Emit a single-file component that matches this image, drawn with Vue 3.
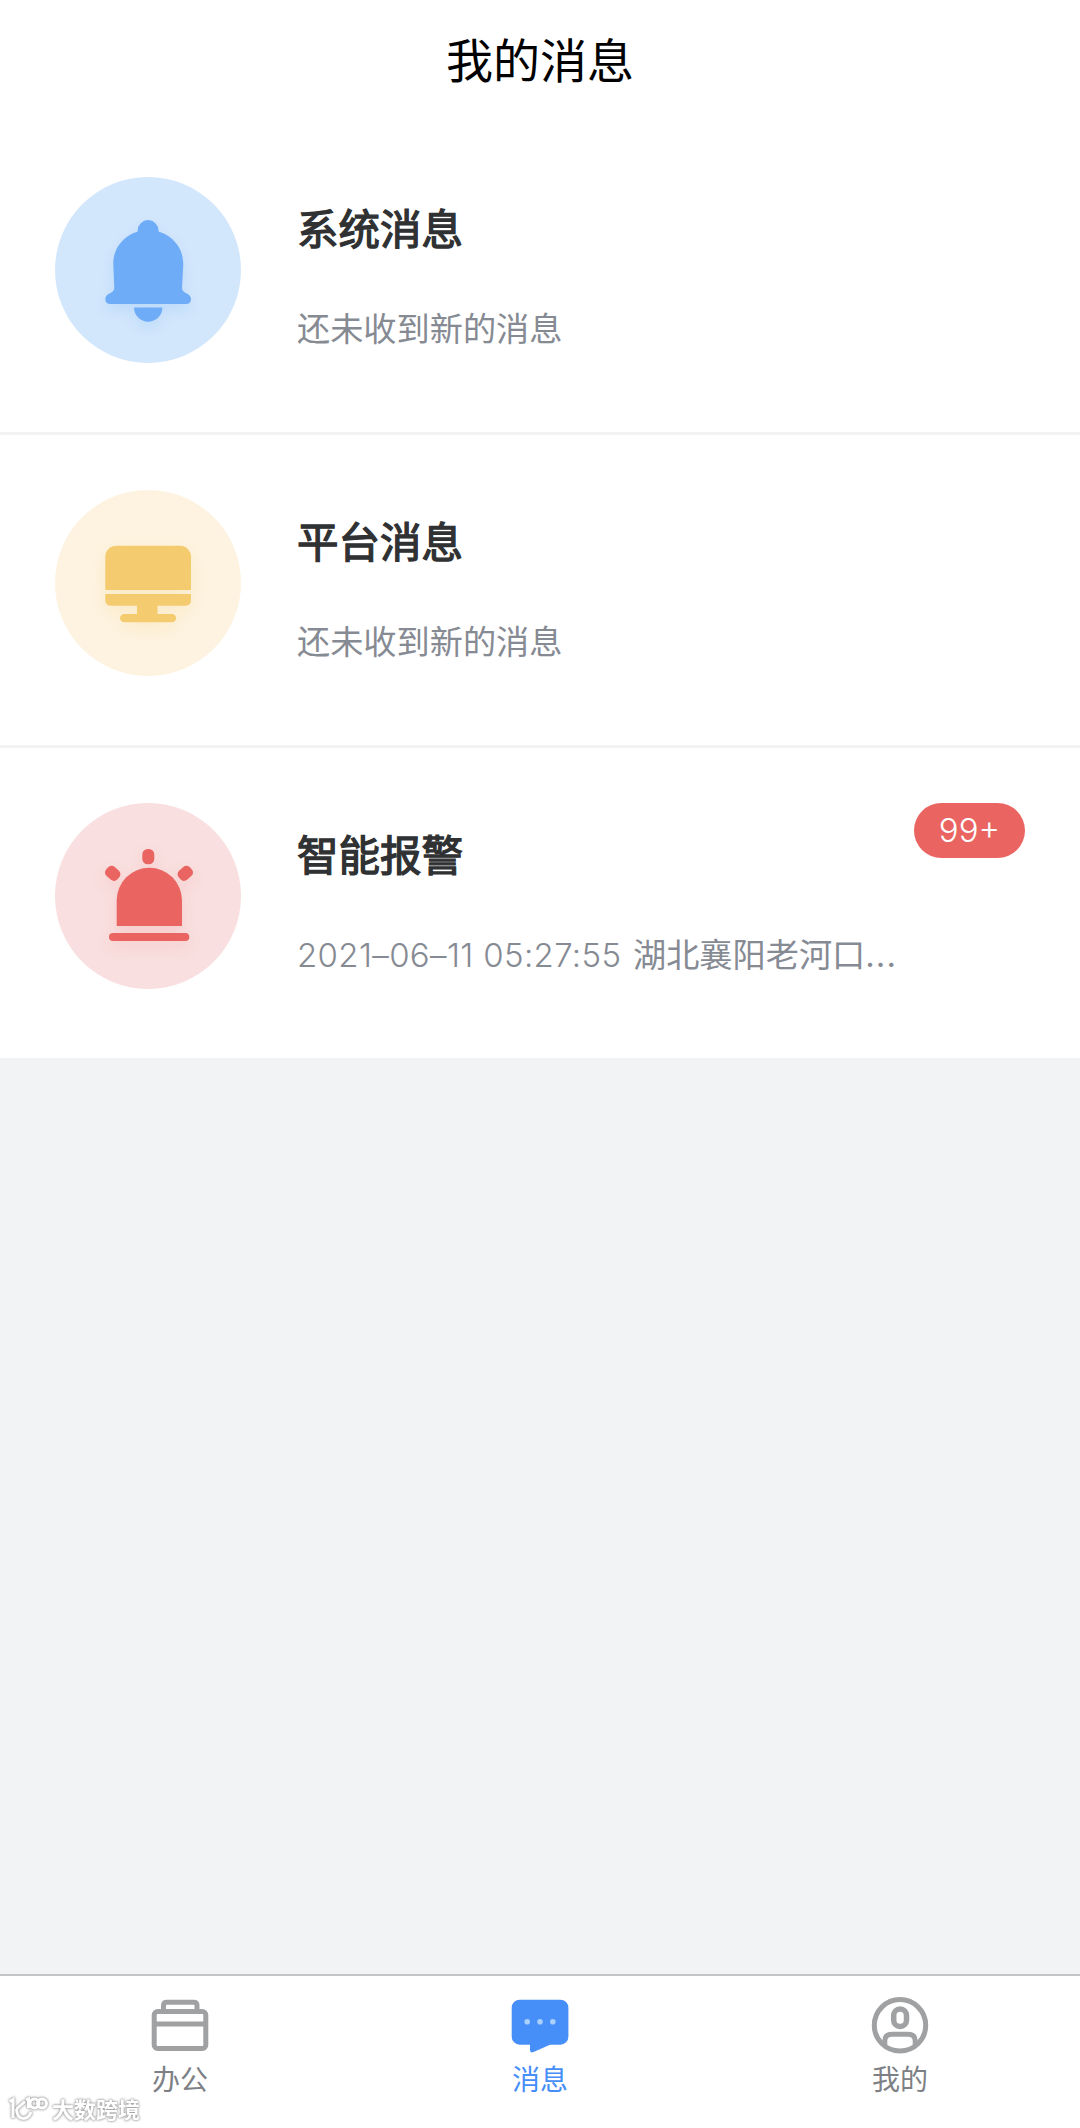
<script setup>
const messages = [
  { kind: 'bell', title: '系统消息', text: '还未收到新的消息' },
  { kind: 'monitor', title: '平台消息', text: '还未收到新的消息' },
  { kind: 'alarm', title: '智能报警', time: '2021–06–11 05:27:55', text: '湖北襄阳老河口', badge: '99+' },
]
const tabs = [
  { kind: 'office', label: '办公' },
  { kind: 'chat', label: '消息', active: true },
  { kind: 'user', label: '我的' },
]
</script>

<template>
  <div class="page">
    <header class="header">我的消息</header>
    <main class="list">
      <section v-for="m in messages" :key="m.kind" class="row">
        <div class="avatar" :class="m.kind">
          <svg viewBox="0 0 186 186">
            <g v-if="m.kind === 'bell'">
              <path d="M82.700 54.500V53.500a10.400 10.400 0 0 1 20.800 0V54.500C118 59 128.300 71 128.300 87L127 111C127 117 136 115.500 136 122Q136 127 131 127H55.300Q50.300 127 50.300 122C50.300 115.500 59.300 117 59.300 111L58.300 87C58.300 71 68.500 59 82.700 54.500Z" />
              <path d="M79 130.500h28.400a14.200 14.200 0 0 1-28.400 0Z" />
            </g>
            <g v-else-if="m.kind === 'monitor'">
              <path d="M50.300 100V66.700a11 11 0 0 1 11-11H125a11 11 0 0 1 11 11V100Z" />
              <path d="M50.300 104H136v6.700a5 5 0 0 1-5 5H102.500V124H117a4.150 4.150 0 0 1 0 8.300H69.200a4.150 4.150 0 0 1 0-8.300H82v-8.300H55.300a5 5 0 0 1-5-5Z" />
            </g>
            <g v-else>
              <path d="M61.700 123V97.400a32.650 32.650 0 0 1 65.300 0V123Z" />
              <rect x="54" y="130" width="80.300" height="8" rx="4" />
              <rect x="87.300" y="46" width="12" height="15.300" rx="5.500" />
              <rect x="51.700" y="62.800" width="12" height="15" rx="4.500" transform="rotate(-48 57.700 70.300)" />
              <rect x="124.300" y="62.800" width="12" height="15" rx="4.500" transform="rotate(48 130.300 70.300)" />
            </g>
          </svg>
        </div>
        <div class="body">
          <h2>{{ m.title }}</h2>
          <p><span v-if="m.time" class="time">{{ m.time }}</span>{{ m.text }}<span v-if="m.time" class="more">...</span></p>
        </div>
        <span v-if="m.badge" class="badge">{{ m.badge }}</span>
      </section>
    </main>
    <nav class="tabs">
      <div v-for="t in tabs" :key="t.kind" class="tab" :class="{ active: t.active }">
        <svg viewBox="0 0 60 60">
          <g v-if="t.kind === 'office'" fill="none" stroke="#a0a1a2" stroke-width="5">
            <rect x="4.200" y="16.500" width="51.600" height="37" rx="3.500" />
            <path d="M4.200 29H55.800M13.500 16V10.500Q13.500 7.200 16.800 7.200H43.700Q47 7.200 47 10.500V16" />
          </g>
          <g v-else-if="t.kind === 'chat'">
            <path fill="#468ef8" d="M9.700 4.700H50.400a8 8 0 0 1 8 8V41.700a8 8 0 0 1-8 8H40L23.500 57Q20 58.500 20 55V49.700H9.700a8 8 0 0 1-8-8V12.700a8 8 0 0 1 8-8Z" />
            <g fill="#a9d0fc"><circle cx="17.200" cy="26.700" r="2.800" /><circle cx="30" cy="26.700" r="2.800" /><circle cx="42.800" cy="26.700" r="2.800" /></g>
          </g>
          <g v-else fill="none" stroke="#a0a1a2" stroke-width="5">
            <circle cx="30" cy="30.300" r="25.700" />
            <rect x="23.700" y="14" width="12.800" height="17.500" rx="6.300" stroke-width="5.500" />
            <path d="M14.800 50V46Q14.800 39.300 22 39.300H38Q45.200 39.300 45.200 46V50" />
          </g>
        </svg>
        <span>{{ t.label }}</span>
      </div>
    </nav>
    <div class="watermark">
      <svg viewBox="0 0 40 26" fill="none" stroke="#fff" stroke-width="3">
        <path d="M1.500 5.500 5 3.500V22M17 5.500 8.500 13M8.500 13C9 25 20 25 23 16M18 4 20.500 3V12" />
        <circle cx="26.500" cy="7.500" r="4.500" /><circle cx="34" cy="7.500" r="4.500" />
      </svg>
      <span>大数跨境</span>
    </div>
  </div>
</template>

<style>
body { margin: 0; }
</style>

<style scoped>
.page {
  position: relative;
  display: flex;
  flex-direction: column;
  width: 1080px;
  height: 2128px;
  overflow: hidden;
  background: #f1f3f5;
  font-family: "Noto Sans CJK SC", sans-serif;
}
.header {
  height: 122px;
  background: #fff;
  color: #000;
  font-size: 47px;
  line-height: 115px;
  text-align: center;
}
.list { flex: 1; }
.row {
  display: flex;
  align-items: flex-start;
  height: 310px;
  box-sizing: border-box;
  padding: 55px 55px 0;
  background: #fff;
}
.row:not(:last-child) { height: 313px; border-bottom: 3px solid #f1f3f5; }
.avatar { flex: none; width: 186px; height: 186px; border-radius: 50%; }
.avatar svg { display: block; width: 186px; height: 186px; }
.bell { background: #d3e7fc; fill: #6eacf8; }
.monitor { background: #fdf3e0; fill: #f5cb6f; }
.alarm { background: #f9dfdf; fill: #ea6562; }
.bell g { filter: drop-shadow(0 6px 7px rgba(110, 172, 248, .22)); }
.monitor g { filter: drop-shadow(0 6px 8px rgba(245, 203, 111, .22)); }
.alarm g { filter: drop-shadow(0 6px 7px rgba(234, 101, 98, .14)); }
.body { flex: 1; min-width: 0; padding: 20px 0 0 56px; white-space: nowrap; }
h2 {
  margin: 0;
  color: #303133;
  font-size: 41.500px;
  font-weight: 400;
  line-height: 60px;
  -webkit-text-stroke: 1.300px #303133;
}
p { margin: 46px 0 0; color: #868a93; font-size: 33.200px; line-height: 48px; font-weight: 400; }
.time { display: inline-block; width: 336px; font-family: Inter, sans-serif; font-size: 33px; font-weight: 300; letter-spacing: .35px; line-height: 48px; }
.more { font-family: Inter, sans-serif; letter-spacing: 1px; }
.badge {
  flex: none;
  width: 111px;
  height: 55px;
  border-radius: 28px;
  background: #ea6562;
  color: #fff;
  font: 300 33px/55px Inter, sans-serif;
  text-align: center;
}
.tabs {
  display: flex;
  height: 154px;
  box-sizing: border-box;
  border-top: 2px solid #c3c4c6;
  background: #fff;
}
.tab {
  flex: 1;
  display: flex;
  flex-direction: column;
  align-items: center;
  padding-top: 19px;
  color: #7d8084;
  font-size: 28px;
  line-height: 40px;
}
.tab svg { width: 60px; height: 60px; margin-bottom: 3px; }
.tab.active { color: #468ef8; }
.watermark {
  position: absolute;
  left: 8px;
  bottom: 5px;
  display: flex;
  align-items: center;
  gap: 4px;
  color: #fff;
  font-size: 22px;
  font-weight: 700;
  line-height: 28px;
  filter: drop-shadow(0 0 1px #999) drop-shadow(0 0 1px #bbb);
}
.watermark svg { width: 40px; height: 26px; overflow: visible; }
.watermark span { padding-bottom: 1px; }
</style>
